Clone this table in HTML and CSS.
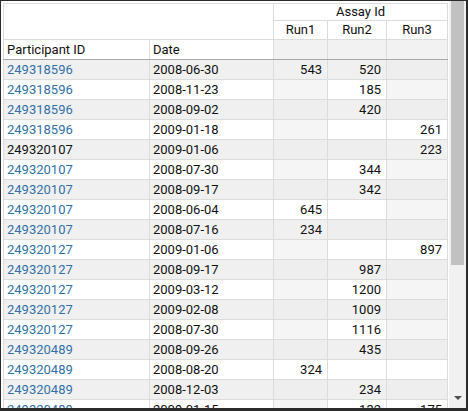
FILE: index.html
```html
<!DOCTYPE html>
<html>
<head>
<meta charset="utf-8">
<link rel="stylesheet" href="styles.css">
</head>
<body>
<div class="frame">
  <div class="grid-wrap">
    <table class="grid">
      <colgroup>
        <col class="c-id"><col class="c-date"><col class="c-r1"><col class="c-r2"><col class="c-r3">
      </colgroup>
      <thead>
        <tr class="h1">
          <td class="blank" colspan="2" rowspan="2"></td>
          <th class="center" colspan="3">Assay Id</th>
        </tr>
        <tr class="h2">
          <th class="center">Run1</th><th class="center">Run2</th><th class="center">Run3</th>
        </tr>
        <tr class="h3">
          <th>Participant ID</th><th>Date</th><th class="hgray"></th><th class="hgray"></th><th class="hgray"></th>
        </tr>
      </thead>
      <tbody>
        <tr class="alt"><td><a>249318596</a></td><td>2008-06-30</td><td class="num">543</td><td class="num">520</td><td class="num e"></td></tr>
        <tr><td><a>249318596</a></td><td>2008-11-23</td><td class="num e"></td><td class="num">185</td><td class="num e"></td></tr>
        <tr class="alt"><td><a>249318596</a></td><td>2008-09-02</td><td class="num e"></td><td class="num">420</td><td class="num e"></td></tr>
        <tr><td><a>249318596</a></td><td>2009-01-18</td><td class="num e"></td><td class="num"></td><td class="num">261</td></tr>
        <tr class="alt"><td>249320107</td><td>2009-01-06</td><td class="num e"></td><td class="num e"></td><td class="num">223</td></tr>
        <tr><td><a>249320107</a></td><td>2008-07-30</td><td class="num e"></td><td class="num">344</td><td class="num e"></td></tr>
        <tr class="alt"><td><a>249320107</a></td><td>2008-09-17</td><td class="num e"></td><td class="num">342</td><td class="num e"></td></tr>
        <tr><td><a>249320107</a></td><td>2008-06-04</td><td class="num">645</td><td class="num"></td><td class="num e"></td></tr>
        <tr class="alt"><td><a>249320107</a></td><td>2008-07-16</td><td class="num">234</td><td class="num e"></td><td class="num e"></td></tr>
        <tr><td><a>249320127</a></td><td>2009-01-06</td><td class="num e"></td><td class="num"></td><td class="num">897</td></tr>
        <tr class="alt"><td><a>249320127</a></td><td>2008-09-17</td><td class="num e"></td><td class="num">987</td><td class="num e"></td></tr>
        <tr><td><a>249320127</a></td><td>2009-03-12</td><td class="num e"></td><td class="num">1200</td><td class="num e"></td></tr>
        <tr class="alt"><td><a>249320127</a></td><td>2009-02-08</td><td class="num e"></td><td class="num">1009</td><td class="num e"></td></tr>
        <tr><td><a>249320127</a></td><td>2008-07-30</td><td class="num e"></td><td class="num">1116</td><td class="num e"></td></tr>
        <tr class="alt"><td><a>249320489</a></td><td>2008-09-26</td><td class="num e"></td><td class="num">435</td><td class="num e"></td></tr>
        <tr><td><a>249320489</a></td><td>2008-08-20</td><td class="num">324</td><td class="num"></td><td class="num"></td></tr>
        <tr class="alt"><td><a>249320489</a></td><td>2008-12-03</td><td class="num e"></td><td class="num">234</td><td class="num e"></td></tr>
        <tr><td><a>249320489</a></td><td>2009-01-15</td><td class="num e"></td><td class="num">132</td><td class="num">175</td></tr>
      </tbody>
    </table>
  </div>
  <div class="scrollbar">
    <div class="thumb"></div>
    <div class="track"></div>
    <div class="arrow"></div>
  </div>
</div>
</body>
</html>
```

FILE: styles.css
```css
html, body {
  margin: 0;
  padding: 0;
  background: #fff;
}
.frame {
  width: 468px;
  height: 411px;
  box-sizing: border-box;
  border-left: 1px solid #2b2b2b;
  border-top: 1px solid #2b2b2b;
  border-right: 2px solid #2b2b2b;
  border-bottom: 3px solid #2b2b2b;
  display: flex;
  overflow: hidden;
  background: #fff;
}
.grid-wrap {
  flex: 0 0 447px;
  box-sizing: border-box;
  padding: 2px 0 0 2px;
  overflow: hidden;
}
.grid {
  border-collapse: collapse;
  table-layout: fixed;
  width: 445px;
  font-family: Roboto, "Liberation Sans", sans-serif;
  font-size: 13px;
  color: #111;
}
.c-id { width: 146px; }
.c-date { width: 124px; }
.c-r1 { width: 54px; }
.c-r2 { width: 59px; }
.c-r3 { width: 61px; }
.grid td, .grid th {
  border: 1px solid #dcdcdc;
  padding: 0 5px 0 3px;
  height: 19px;
  line-height: 19px;
  white-space: nowrap;
  overflow: hidden;
  text-align: left;
  font-weight: normal;
}
.grid .h1 th {
  height: 16px;
  line-height: 16px;
}
.grid .h2 th {
  height: 18px;
  line-height: 18px;
  padding-top: 1px;
  box-sizing: border-box;
}
.grid th.center {
  text-align: center;
  padding: 0;
}
.grid .h3 th {
  border-bottom: 1px solid #a8a8a8;
}
.grid th.hgray {
  background: #f2f2f2;
}
.grid td.num {
  text-align: right;
}
.grid tr.alt td {
  background: #f0f0f0;
}
.grid td.e {
  background: #f5f5f5;
}
.grid tr.alt td.e {
  background: #eeeeee;
}
.grid a {
  color: #3071a9;
  text-decoration: none;
}
.scrollbar {
  flex: 0 0 18px;
  margin-left: 1px;
  background: #f1f1f1;
  display: flex;
  flex-direction: column;
  position: relative;
}
.thumb {
  margin: 0 3px 0 2px;
  height: 264px;
  background: #c1c1c1;
}
.track {
  flex: 1;
}
.arrow {
  position: absolute;
  left: 5px;
  bottom: 8px;
  width: 0;
  height: 0;
  border-left: 4px solid transparent;
  border-right: 4px solid transparent;
  border-top: 4px solid #505050;
}
```
